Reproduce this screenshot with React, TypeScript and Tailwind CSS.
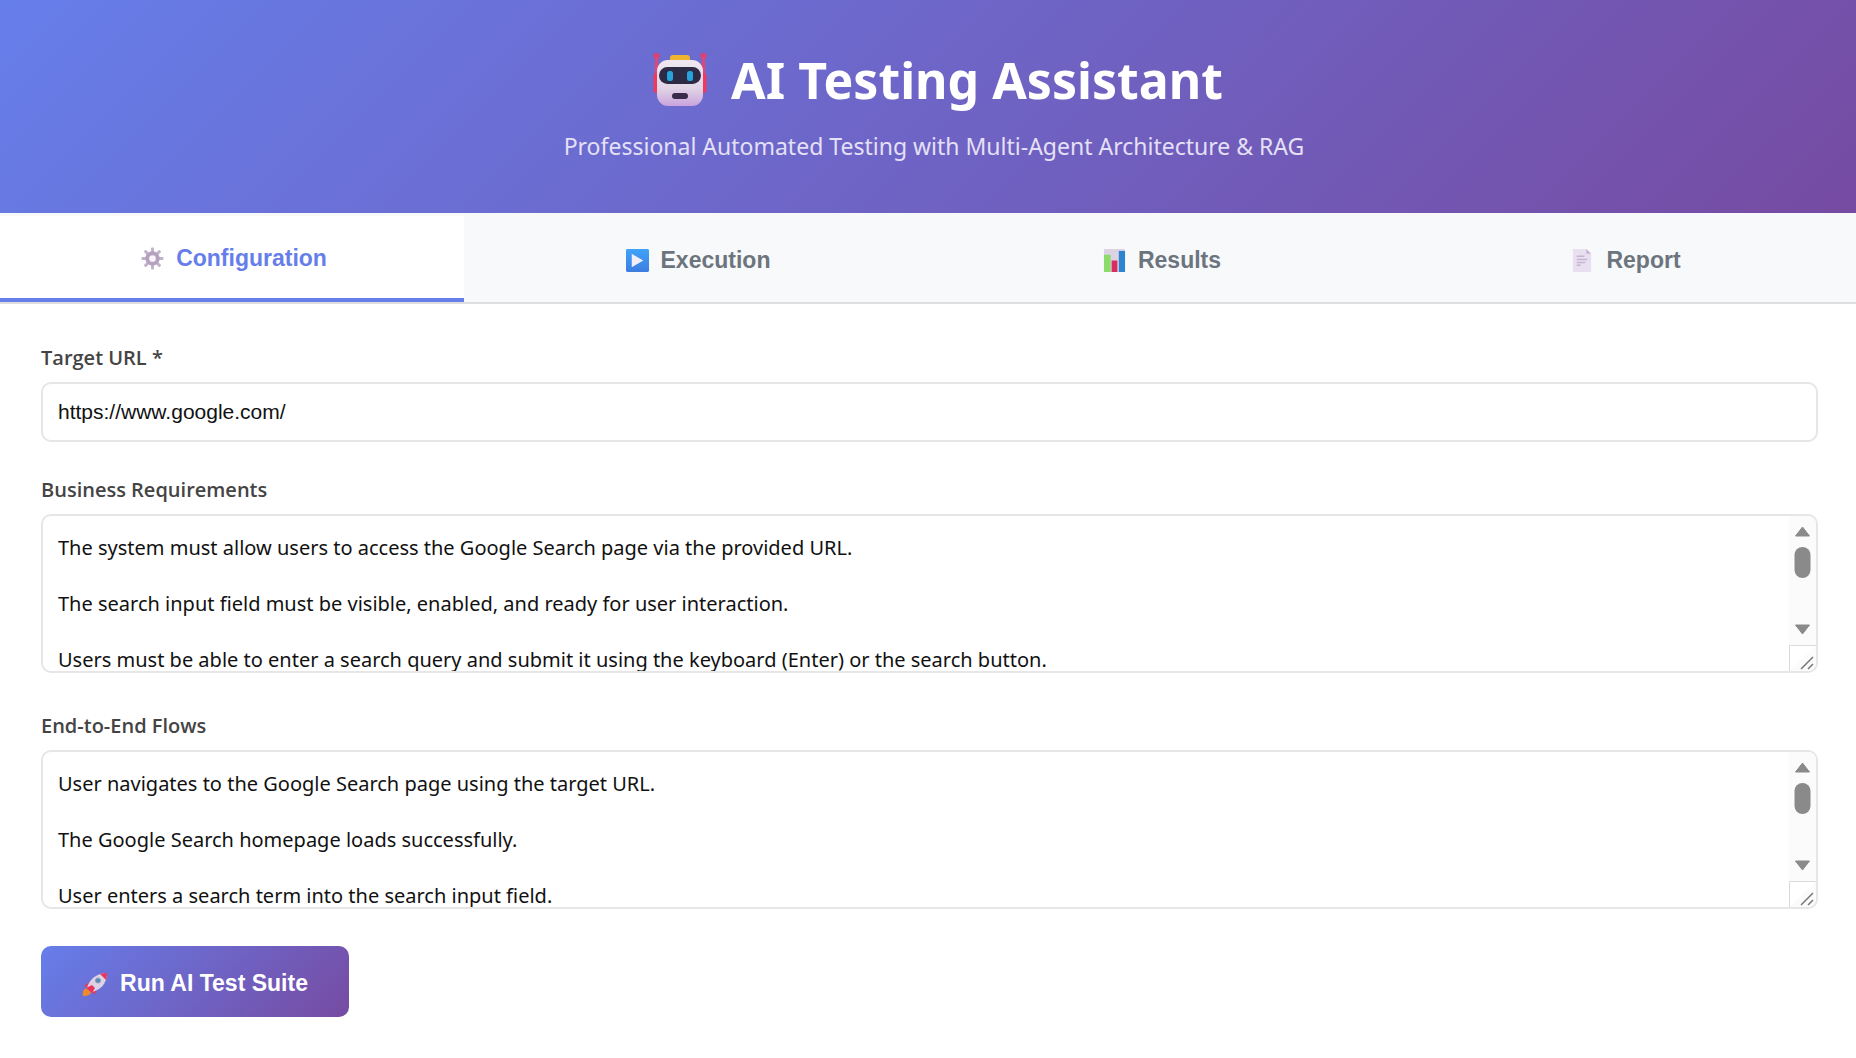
import React, { ReactNode } from "react";

const requirements = `The system must allow users to access the Google Search page via the provided URL.

The search input field must be visible, enabled, and ready for user interaction.

Users must be able to enter a search query and submit it using the keyboard (Enter) or the search button.`;

const flows = `User navigates to the Google Search page using the target URL.

The Google Search homepage loads successfully.

User enters a search term into the search input field.`;

const RobotIcon = () => (
  <svg className="w-[54px] h-[54px]" viewBox="0 0 54 54" aria-hidden="true">
    <defs>
      <linearGradient id="robotFace" x1="0" y1="0" x2="0" y2="1">
        <stop offset="0" stopColor="#efe8f2" />
        <stop offset="0.6" stopColor="#e2d6e6" />
        <stop offset="1" stopColor="#c9a3dc" />
      </linearGradient>
    </defs>
    <circle cx="3.5" cy="3" r="3" fill="#e23f6e" />
    <circle cx="50.5" cy="3" r="3" fill="#e23f6e" />
    <path d="M2 4h3l1 17H1.500zM49 4h3l.5 17H48z" fill="#d84a7c" />
    <rect x="0.5" y="20" width="6" height="20" rx="3" fill="#ee3a5e" />
    <rect x="47.5" y="20" width="6" height="20" rx="3" fill="#ee3a5e" />
    <rect x="17" y="2" width="20" height="9" rx="3" fill="#efb52e" />
    <rect x="4" y="7" width="46" height="46" rx="11" fill="url(#robotFace)" />
    <rect x="6" y="14" width="42" height="17" rx="8.5" fill="#2d2a45" />
    <rect x="14" y="18" width="6" height="10" rx="2.5" fill="#26a3dc" />
    <rect x="34" y="18" width="6" height="10" rx="2.5" fill="#26a3dc" />
    <rect x="19" y="40" width="16" height="6" rx="3" fill="#3a2b4a" />
  </svg>
);

const GearIcon = () => (
  <svg className="w-[23px] h-[23px]" viewBox="0 0 24 24" aria-hidden="true">
    <g fill="#c0b2c9">
      {[0, 45, 90, 135].map((angle) => (
        <rect
          key={angle}
          x="10.5"
          y="0.5"
          width="3"
          height="23"
          rx="1"
          transform={`rotate(${angle} 12 12)`}
        />
      ))}
    </g>
    <circle cx="12" cy="12" r="5.5" fill="#f8f4fa" stroke="#b3a1be" strokeWidth="4" />
  </svg>
);

const PlayIcon = () => (
  <svg className="w-[23px] h-[23px]" viewBox="0 0 24 24" aria-hidden="true">
    <defs>
      <linearGradient id="playTile" x1="0" y1="0" x2="0" y2="1">
        <stop offset="0" stopColor="#3fa3fa" />
        <stop offset="1" stopColor="#3d7de0" />
      </linearGradient>
    </defs>
    <rect x="0" y="0" width="24" height="24" rx="1.5" fill="url(#playTile)" />
    <path d="M6 5v14l12-7z" fill="#f3ecfb" />
  </svg>
);

const ChartIcon = () => (
  <svg className="w-[23px] h-[23px]" viewBox="0 0 24 24" aria-hidden="true">
    <rect x="1" y="0" width="22" height="24" rx="1" fill="#ddd3e4" />
    <path d="M1 6h7v18H1z" fill="#8bdc6b" />
    <path d="M9 12h6v12H9z" fill="#d92c63" />
    <path d="M16.500 2H23v22h-6.500z" fill="#2f84cf" />
  </svg>
);

const PageIcon = () => (
  <svg className="w-[23px] h-[23px]" viewBox="0 0 24 24" aria-hidden="true">
    <path d="M2 0h14l5 5v19H2z" fill="#e8dff0" />
    <path d="M16 0v5h5z" fill="#c4b4d0" />
    <path d="M6 7.500h8M6 11h11M6 14h9M6 17h4" stroke="#c3b4cf" strokeWidth="1.6" />
  </svg>
);

const RocketIcon = () => (
  <svg className="w-[26px] h-[26px]" viewBox="0 0 26 26" aria-hidden="true">
    <path d="M1 25c-1-5 1-8 5-8l3 3c0 4-3 5-8 5z" fill="#ee8a2b" />
    <path d="M9 10l-7 5 5 2zM16 17l-4 7-2-5z" fill="#e8355f" />
    <path d="M5 17c2-8 9-15 20-15 0 11-7 17-15 19z" fill="#dcd4e6" />
    <path d="M18 2.900c2-.6 4.500-.9 7-.9 0 2.500-.3 5-.9 7z" fill="#e8355f" />
    <circle cx="16" cy="9.500" r="2.600" fill="#4f8fb8" stroke="#a69bb8" />
    <path d="M4 17l6-3 3 3-3 5z" fill="#e8355f" />
  </svg>
);

const tabs = [
  { title: "Configuration", icon: <GearIcon />, active: true },
  { title: "Execution", icon: <PlayIcon />, active: false },
  { title: "Results", icon: <ChartIcon />, active: false },
  { title: "Report", icon: <PageIcon />, active: false },
];

const Field = ({
  id,
  label,
  children,
}: {
  id: string;
  label: string;
  children: ReactNode;
}) => {
  return (
    <div className="flex flex-col gap-2">
      <label
        htmlFor={id}
        className="font-['Open_Sans',sans-serif] text-[20px] leading-[32px] font-semibold text-[#444]"
      >
        {label}
      </label>
      {children}
    </div>
  );
};

const ScrollTextArea = ({ id, value }: { id: string; value: string }) => {
  return (
    <div className="relative mb-[5px] h-[159px] overflow-hidden rounded-[10px] border-2 border-[#e6e6e6]">
      <textarea
        id={id}
        defaultValue={value}
        className="block h-full w-full resize-none pt-[18px] pb-4 pl-[15px] pr-10 font-['Noto_Sans',sans-serif] text-[20px] leading-[28px] text-[#111] outline-none [scrollbar-width:none]"
      />
      <svg
        className="absolute right-0 top-0 h-[155px] w-[27px]"
        viewBox="0 0 27 155"
        aria-hidden="true"
      >
        <path d="M0 0h27v155H0z" fill="#fbfbfb" />
        <path d="M13.500 11l7 9h-14z" fill="#8a8a8a" stroke="#8a8a8a" strokeLinejoin="round" />
        <rect x="5.500" y="31" width="16" height="31" rx="8" fill="#8a8a8a" />
        <path d="M13.500 118l7-9h-14z" fill="#8a8a8a" stroke="#8a8a8a" strokeLinejoin="round" />
        <path d="M0.500 155v-25.500H27" fill="#fff" stroke="#d9d9d9" />
        <path d="M12 153l12-12M19 153l5-5" stroke="#777" strokeWidth="1.500" />
      </svg>
    </div>
  );
};

const App = () => {
  return (
    <div className="min-h-screen bg-white">
      <header className="flex flex-col items-center bg-[linear-gradient(135deg,#667eea_0%,#764ba2_100%)] pt-[44px] pb-[50px] pl-3">
        <h1 className="flex items-center gap-6 pl-2 font-['Noto_Sans',sans-serif] text-[50px] leading-[72px] font-bold text-white">
          <RobotIcon />
          AI Testing Assistant
        </h1>
        <p className="mt-[14px] font-['Noto_Sans',sans-serif] text-[23px] leading-[33px] text-[#e4e0f6]">
          Professional Automated Testing with Multi-Agent Architecture &amp; RAG
        </p>
      </header>
      <nav className="flex border-b-2 border-[#dedede] bg-[#f8f9fb] pt-[3px]">
        {tabs.map((tab) => (
          <button
            key={tab.title}
            className={
              tab.active
                ? "flex h-[86px] flex-1 items-center justify-center gap-3 border-b-4 border-[#667eea] bg-white pt-0.5 pl-1 font-['Liberation_Sans',sans-serif] text-[23px] font-bold text-[#667eea]"
                : "flex h-[86px] flex-1 items-center justify-center gap-3 pt-0.5 pl-1 font-['Liberation_Sans',sans-serif] text-[23px] font-bold text-[#6c757d]"
            }
          >
            {tab.icon}
            {tab.title}
          </button>
        ))}
      </nav>
      <main className="flex flex-col gap-8 pt-[38px] pr-[38px] pb-10 pl-[41px]">
        <Field id="url" label="Target URL *">
          <input
            id="url"
            type="text"
            defaultValue="https://www.google.com/"
            className="h-[60px] rounded-[10px] border-2 border-[#e6e6e6] px-[15px] font-['Liberation_Sans',sans-serif] text-[21px] text-[#111] outline-none"
          />
        </Field>
        <Field id="requirements" label="Business Requirements">
          <ScrollTextArea id="requirements" value={requirements} />
        </Field>
        <Field id="flows" label="End-to-End Flows">
          <ScrollTextArea id="flows" value={flows} />
        </Field>
        <button className="flex h-[71px] w-[308px] items-center justify-center gap-3 rounded-[10px] bg-[linear-gradient(135deg,#667eea_0%,#764ba2_100%)] pt-1 font-['Liberation_Sans',sans-serif] text-[23px] font-bold text-white">
          <RocketIcon />
          Run AI Test Suite
        </button>
      </main>
    </div>
  );
};

export default App;
